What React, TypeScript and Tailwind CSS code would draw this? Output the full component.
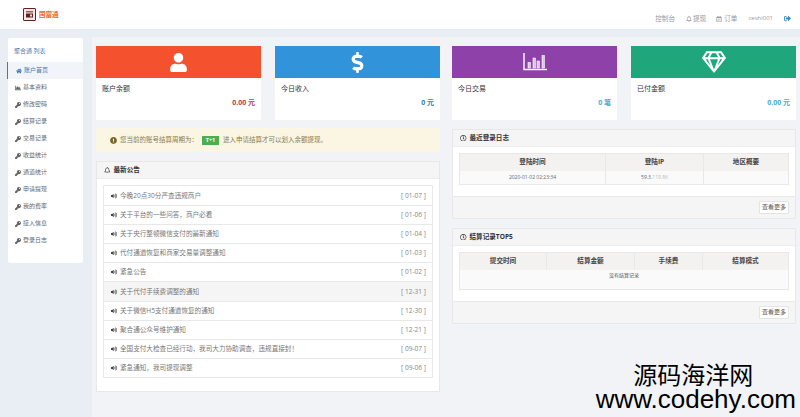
import React from 'react';
import {
  FaUser, FaDollarSign, FaRegGem, FaHome, FaChartArea, FaKey,
  FaExclamationCircle, FaRegBell, FaRegClock, FaVolumeUp, FaRegCalendarAlt, FaSignOutAlt,
} from 'react-icons/fa';

const cjk = { fontFamily: '"Open Sans", "Noto Sans CJK SC", sans-serif' };

const menu = ['修改密码', '结算记录', '交易记录', '收益统计', '通道统计', '申请提现', '我的费率', '接入信息', '登录日志'];

const notices = [
  ['今晚20点30分严查违规商户', '01-07'],
  ['关于平台的一些问答，商户必看', '01-06'],
  ['关于央行整顿微信支付的最新通知', '01-04'],
  ['代付通道恢复和商家交易量调整通知', '01-03'],
  ['紧急公告', '01-02'],
  ['关于代付手续费调整的通知', '12-31'],
  ['关于微信H5支付通道恢复的通知', '12-30'],
  ['聚合通公众号维护通知', '12-21'],
  ['全国支付大检查已经行动，我司大力协助调查，违规直接封！', '09-07'],
  ['紧急通知，我司提现调整', '09-06'],
];

const StatCard = ({ color, icon, title, value, valueColor }: { color: string; icon: React.ReactNode; title: string; value: string; valueColor: string }) => (
  <div className="h-[74px] bg-white">
    <div className={`h-[32px] flex items-center justify-center text-white ${color}`}>{icon}</div>
    <div className="px-[6px] pt-[6px] text-[7px] leading-[10px] text-[#333]">{title}</div>
    <div className={`px-[6px] pt-[4px] text-right text-[7px] leading-[10px] font-bold ${valueColor}`}>{value}</div>
  </div>
);

const Panel = ({ icon, title, children, className }: { icon: React.ReactNode; title: string; children: React.ReactNode; className: string }) => (
  <div className={`bg-white border border-[#e8e8e8] ${className}`}>
    <div className="h-[17px] bg-[#f5f5f5] border-b border-[#ededed] flex items-center gap-[3px] px-[7px] text-[6.6px] font-bold text-[#333]">
      {icon}
      <span>{title}</span>
    </div>
    {children}
  </div>
);

const Footer = () => (
  <div className="mt-auto h-[22px] bg-[#f5f5f5] border-t border-[#e8e8e8] flex items-center justify-end pr-[6px]">
    <div className="h-[13px] w-[30px] bg-white border border-[#e4e4e4] rounded-[1px] flex items-center justify-center text-[6px] text-[#555]">查看更多</div>
  </div>
);

const BarsIcon = () => (
  <svg width="24" height="18" viewBox="0 0 24 18" fill="none" stroke="currentColor">
    <path d="M1 0v16.5h23" strokeWidth="1.4" />
    <rect x="5" y="9.5" width="2.4" height="5.5" fill="currentColor" fillOpacity="0.7" strokeWidth="0.6" />
    <rect x="10" y="5" width="2.4" height="10" fill="currentColor" fillOpacity="0.7" strokeWidth="0.6" />
    <rect x="14" y="8" width="2.4" height="7" fill="currentColor" fillOpacity="0.7" strokeWidth="0.6" />
    <rect x="19" y="2.5" width="2.4" height="12.5" fill="currentColor" fillOpacity="0.7" strokeWidth="0.6" />
  </svg>
);

const App: React.FC = () => {
  return (
    <div className="relative h-[417px] w-[800px] overflow-hidden bg-[#e9edf4]" style={cjk}>
      <header className="h-[29px] bg-white flex items-center">
        <div className="ml-[23px] w-[13px] h-[13px] border border-[#5a2426] bg-[#f4e6e0] rounded-[1px] flex items-center justify-center">
          <svg width="9" height="9" viewBox="0 0 9 9">
            <rect x="1" y="1" width="7" height="1.5" fill="#a45a5a" />
            <rect x="1" y="3.5" width="7" height="4" fill="#5b2222" />
            <rect x="5" y="4.5" width="2" height="2" fill="#f2e4dc" />
          </svg>
        </div>
        <span className="ml-[3px] text-[6.5px] font-bold text-[#e8652a]">国富通</span>
        <nav className="ml-auto flex items-center pt-[9px] text-[6.6px] text-[#999]">
          <span>控制台</span>
          <FaRegBell className="ml-[11px] mr-[1px] text-[6px]" />
          <span>提现</span>
          <FaRegCalendarAlt className="ml-[10px] mr-[2px] text-[6px]" />
          <span>订单</span>
          <span className="ml-[11px] text-[6px]">ceshi001</span>
          <FaSignOutAlt className="ml-[11px] mr-[9px] text-[7px] text-[#3a8cc4]" />
        </nav>
      </header>

      <div className="flex pt-[8px]">
        <aside className="ml-[8px] mt-px w-[75px] h-[225px] bg-white rounded-[2px] shrink-0">
          <div className="pl-[6px] pt-[9px] h-[24px] text-[6px] leading-[9px] text-[#3a7cb8]">聚合通 列表</div>
          <div className="h-[17px] -ml-px border-l border-[#3a7cb8] bg-[#f1f5f9] flex items-center pl-[8px] gap-[2px] text-[6px] text-[#3a7cb8]">
            <FaHome className="text-[6px]" />
            <span>账户首页</span>
          </div>
          <div className="h-[17px] flex items-center pl-[7px] gap-[2px] text-[6px] text-[#666]">
            <FaChartArea className="text-[6px]" />
            <span>基本资料</span>
          </div>
          {menu.map((m) => (
            <div key={m} className="h-[17px] flex items-center pl-[7px] gap-[2px] text-[6px] text-[#666]">
              <FaKey className="text-[6px]" />
              <span>{m}</span>
            </div>
          ))}
        </aside>

        <main className="ml-[9px] flex-1 h-[380px] bg-[#f2f3f6] px-[4px] pt-[9px] grid grid-cols-2 gap-x-[12px] content-start">
          <div>
            <div className="grid grid-cols-2 gap-x-[14px]">
              <StatCard color="bg-[#f4512f]" icon={<FaUser className="text-[19px]" />} title="账户余额" value="0.00 元" valueColor="text-[#c0394a]" />
              <StatCard color="bg-[#3194db]" icon={<FaDollarSign className="text-[21px]" />} title="今日收入" value="0 元" valueColor="text-[#3a7ca8]" />
            </div>
            <div className="mt-[8px] h-[24px] bg-[#fbf6e4] flex items-center pl-[14px] text-[6.5px] text-[#8a7a50]">
              <FaExclamationCircle className="text-[7px] text-[#7a6428] mr-[3px]" />
              <span>您当前的账号结算周期为：</span>
              <span className="mx-[4px] h-[9px] w-[17px] bg-[#4cae4f] text-white text-[5.5px] font-bold flex items-center justify-center">T+1</span>
              <span>进入申请结算才可以划入余额提现。</span>
            </div>
            <Panel icon={<FaRegBell className="text-[6.5px]" />} title="最新公告" className="mt-[9px] h-[231px]">
              <div className="mx-[6px] mt-[6px] border border-[#e8e8e8] rounded-[1px]">
                {notices.map(([text, date], i) => (
                  <div
                    key={date}
                    className={`h-[19.1px] flex items-center pl-[7px] pr-[6px] text-[6.6px] text-[#777] border-[#e8e8e8] ${i > 0 ? 'border-t' : ''} ${i === 5 ? 'bg-[#f5f5f5]' : ''}`}
                  >
                    <FaVolumeUp className="text-[6px] text-[#444] mr-[3px]" />
                    <span>{text}</span>
                    <span className="ml-auto text-[#888]">[ {date} ]</span>
                  </div>
                ))}
              </div>
            </Panel>
          </div>

          <div>
            <div className="grid grid-cols-2 gap-x-[14px]">
              <StatCard color="bg-[#8e41a8]" icon={<BarsIcon />} title="今日交易" value="0 笔" valueColor="text-[#45aecb]" />
              <StatCard color="bg-[#1fa67a]" icon={<FaRegGem className="text-[24px]" />} title="已付金额" value="0.00 元" valueColor="text-[#45aecb]" />
            </div>
            <Panel icon={<FaRegClock className="text-[6.5px]" />} title="最近登录日志" className="mt-[9px] h-[90px] flex flex-col">
              <table className="mx-[6px] mt-[6px] w-[330px] table-fixed border border-[#e8e8e8] text-center text-[#444]">
                <thead>
                  <tr className="h-[17px] bg-[#f4f1f1] text-[6.6px]">
                    <th className="w-[146px] border-r border-[#e8e8e8] font-bold">登陆时间</th>
                    <th className="w-[98px] border-r border-[#e8e8e8] font-bold">登陆IP</th>
                    <th className="font-bold">地区概要</th>
                  </tr>
                </thead>
                <tbody>
                  <tr className="h-[14px] bg-[#fafafa] text-[5px] text-[#666]">
                    <td className="border-r border-[#e8e8e8]">2020-01-02 02:23:34</td>
                    <td className="border-r border-[#e8e8e8]">59.3.<span className="text-[#bbb]">119.86</span></td>
                    <td></td>
                  </tr>
                </tbody>
              </table>
              <Footer />
            </Panel>
            <Panel icon={<FaRegClock className="text-[6.5px]" />} title="结算记录TOP5" className="mt-[9px] h-[96px] flex flex-col">
              <table className="mx-[6px] mt-[6px] w-[330px] table-fixed border border-[#e8e8e8] text-center text-[#444]">
                <thead>
                  <tr className="h-[17px] bg-[#f4f1f1] text-[6.6px]">
                    <th className="w-[87px] border-r border-[#e8e8e8] font-bold">提交时间</th>
                    <th className="w-[88px] border-r border-[#e8e8e8] font-bold">结算金额</th>
                    <th className="w-[68px] border-r border-[#e8e8e8] font-bold">手续费</th>
                    <th className="font-bold">结算模式</th>
                  </tr>
                </thead>
                <tbody>
                  <tr className="h-[20px] bg-[#fafafa] text-[5px] text-[#555]">
                    <td colSpan={4} className="align-top pt-[2px]">没有结算记录</td>
                  </tr>
                </tbody>
              </table>
              <Footer />
            </Panel>
          </div>
        </main>
      </div>

      <div className="absolute right-[4px] top-[361px] flex flex-col items-center text-black">
        <span className="mr-[5px] text-[24px] leading-[26px]" style={{ fontFamily: '"Noto Sans CJK SC", sans-serif' }}>源码海洋网</span>
        <span className="text-[26px] leading-[24px]" style={{ fontFamily: '"Liberation Sans", sans-serif' }}>www.codehy.com</span>
      </div>
    </div>
  );
};

export default App;
